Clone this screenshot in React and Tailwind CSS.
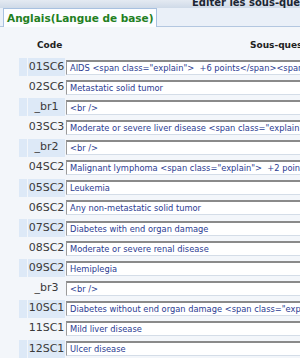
import React from "react";

const rows = [
  ["01SC6", 'AIDS <span class="explain">  +6 points</span><span class="explain2">'],
  ["02SC6", "Metastatic solid tumor"],
  ["_br1", "<br />"],
  ["03SC3", 'Moderate or severe liver disease <span class="explain">: +3 points</span>'],
  ["_br2", "<br />"],
  ["04SC2", 'Malignant lymphoma <span class="explain">  +2 points</span>'],
  ["05SC2", "Leukemia"],
  ["06SC2", "Any non-metastatic solid tumor"],
  ["07SC2", "Diabetes with end organ damage"],
  ["08SC2", "Moderate or severe renal disease"],
  ["09SC2", "Hemiplegia"],
  ["_br3", "<br />"],
  ["10SC1", 'Diabetes without end organ damage <span class="explain"> +1 point</span>'],
  ["11SC1", "Mild liver disease"],
  ["12SC1", "Ulcer disease"],
];

export default function App() {
  return (
    <div className="w-[300px] h-[358px] overflow-hidden bg-[#f3f6fa] font-['DejaVu_Sans',sans-serif]">
      <div className="h-[8px] overflow-hidden bg-gradient-to-b from-[#e4eaf2] to-[#cfdae8]">
        <div className="mt-[-2.5px] pl-[192px] whitespace-nowrap text-[10px] leading-[10px] font-bold text-[#1c2633]">
          Editer les sous-questions
        </div>
      </div>
      <div className="h-[19px] flex bg-[#eaf0f8] border-b border-[#b3c7e0]">
        <div className="ml-[3px] w-[154px] h-[19px] bg-[#fcfdff] border border-b-0 border-[#a8c1e0] pl-[3px] text-[10.5px] leading-[18px] font-bold text-[#23801f] whitespace-nowrap">
          Anglais(Langue de base)
        </div>
      </div>
      <div className="h-[30px] flex text-[9px] leading-[10px] font-bold text-[#222] pt-[13px] whitespace-nowrap">
        <div className="w-[37px] shrink-0" />
        <div className="w-[213px] shrink-0">Code</div>
        <div>Sous-questions</div>
      </div>
      <div className="flex flex-col">
        {rows.map(([code, text], i) => {
          const hl = i % 2 === 0;
          return (
            <div key={code} className="h-[20.14px] flex items-center shrink-0">
              <div className="w-[19px] shrink-0" />
              <div className={`w-[8px] h-[18px] shrink-0 ${hl ? "bg-[#dde9f7]" : ""}`} />
              <div
                className={`ml-[1px] w-[37px] h-[18px] shrink-0 flex items-center justify-center text-[11px] text-[#3a3a3a] whitespace-nowrap ${hl ? "bg-[#dde9f7]" : ""}`}
              >
                {code}
              </div>
              <div className="ml-[1px] w-[400px] h-[15px] shrink-0 bg-white border-t-2 border-l border-t-[#8a8a8a] border-l-[#9a9a9a] border-b border-r border-b-[#d4dde8] border-r-[#dcdcdc] pl-[3px] text-[8.3px] leading-[12px] text-[#2b3c92] whitespace-pre overflow-hidden">
                {text}
              </div>
            </div>
          );
        })}
      </div>
    </div>
  );
}
